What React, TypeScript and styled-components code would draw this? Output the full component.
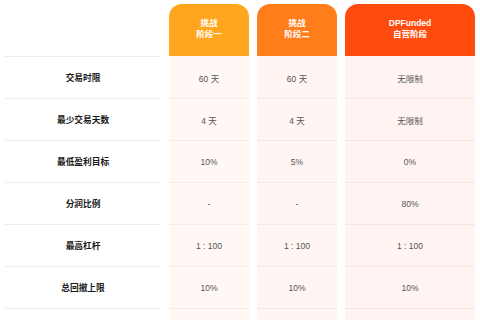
import React from "react";
import styled, { createGlobalStyle } from "styled-components";

const Global = createGlobalStyle`
  html, body { margin: 0; padding: 0; background: #ffffff; }
  body { font-family: "Liberation Sans", Arial, "Noto Sans CJK SC", sans-serif; }
`;

const Page = styled.div`
  width: 480px;
  height: 320px;
  overflow: hidden;
  background: #ffffff;
  padding: 4px 5px 0 5px;
  box-sizing: border-box;
`;

const Table = styled.div`
  display: grid;
  grid-template-columns: 156px 80px 80px 130px;
  column-gap: 8px;
  grid-auto-rows: 42px;
  grid-template-rows: 52px;
`;

type Tone = "a" | "b" | "c";

const headBg: Record<Tone, string> = {
  a: "#ffa61e",
  b: "#ff7d1a",
  c: "#ff4b0e",
};

const bodyBg: Record<Tone, string> = {
  a: "#fff8f4",
  b: "#fff6f3",
  c: "#fff4f1",
};

const bodyLine: Record<Tone, string> = {
  a: "#f6ebe5",
  b: "#f6e9e5",
  c: "#f5e6e2",
};

const Corner = styled.div``;

const Head = styled.div<{ $tone: Tone }>`
  background: ${(p) => headBg[p.$tone]};
  border-radius: 13px 13px 0 0;
  display: flex;
  flex-direction: column;
  align-items: center;
  justify-content: center;
  padding-bottom: 3px;
  box-sizing: border-box;
  color: #ffffff;
  font-weight: 700;
  font-size: 8.5px;
  line-height: 10.5px;
  text-align: center;
`;

const Label = styled.div`
  border-top: 1px solid #ececec;
  display: flex;
  align-items: center;
  justify-content: center;
  font-weight: 700;
  font-size: 8.7px;
  color: #1a1a1a;
  box-sizing: border-box;
`;

const Cell = styled.div<{ $tone: Tone; $first?: boolean }>`
  background: ${(p) => bodyBg[p.$tone]};
  border-top: 1px solid ${(p) => (p.$first ? bodyBg[p.$tone] : bodyLine[p.$tone])};
  display: flex;
  align-items: center;
  justify-content: center;
  font-size: 8.5px;
  color: #555555;
  box-sizing: border-box;
`;

const heads: { tone: Tone; lines: string[] }[] = [
  { tone: "a", lines: ["挑战", "阶段一"] },
  { tone: "b", lines: ["挑战", "阶段二"] },
  { tone: "c", lines: ["DPFunded", "自营阶段"] },
];

const rows: { label: string; values: string[] }[] = [
  { label: "交易时限", values: ["60 天", "60 天", "无限制"] },
  { label: "最少交易天数", values: ["4 天", "4 天", "无限制"] },
  { label: "最低盈利目标", values: ["10%", "5%", "0%"] },
  { label: "分润比例", values: ["-", "-", "80%"] },
  { label: "最高杠杆", values: ["1 : 100", "1 : 100", "1 : 100"] },
  { label: "总回撤上限", values: ["10%", "10%", "10%"] },
  { label: "", values: ["", "", ""] },
];

const tones: Tone[] = ["a", "b", "c"];

export default function App() {
  return (
    <>
      <Global />
      <Page>
        <Table>
          <Corner />
          {heads.map((h, i) => (
            <Head key={i} $tone={h.tone}>
              {h.lines.map((l, j) => (
                <span key={j}>{l}</span>
              ))}
            </Head>
          ))}
          {rows.map((r, ri) => (
            <React.Fragment key={ri}>
              <Label>{r.label}</Label>
              {r.values.map((v, vi) => (
                <Cell key={vi} $tone={tones[vi]} $first={ri === 0}>
                  {v}
                </Cell>
              ))}
            </React.Fragment>
          ))}
        </Table>
      </Page>
    </>
  );
}
